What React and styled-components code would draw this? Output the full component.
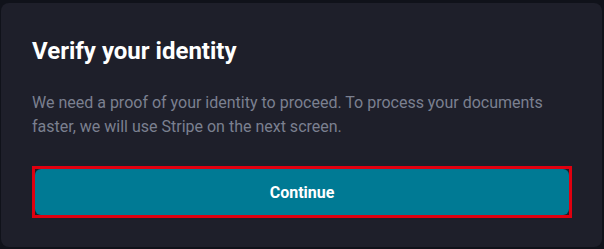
import React from "react";
import styled, { createGlobalStyle } from "styled-components";

const Global = createGlobalStyle`
  html, body { margin: 0; padding: 0; background: #10121a; }
  body { font-family: Roboto, "Noto Sans", Arial, sans-serif; }
  #root { padding: 3px 2px 2px 1px; }
`;

const Card = styled.section`
  box-sizing: border-box;
  width: 601px;
  height: 244px;
  background: #1e1f2a;
  border-radius: 8px;
  padding: 34px 30px 30px 31px;
  display: flex;
  flex-direction: column;
`;

const Title = styled.h2`
  margin: 0;
  font-size: 24px;
  font-weight: 700;
  line-height: 28px;
  color: #ffffff;
`;

const Text = styled.p`
  margin: 26px 0 0;
  font-size: 16px;
  line-height: 24px;
  color: #7b8090;
`;

const Ring = styled.div`
  margin-top: 27px;
  border: 3px solid #e0000f;
  display: flex;
`;

const Button = styled.button`
  flex: 1;
  height: 46px;
  border: 0;
  border-radius: 6px;
  background: #007a94;
  color: #ffffff;
  font-family: Roboto, "Noto Sans", Arial, sans-serif;
  font-size: 16px;
  font-weight: 700;
  cursor: pointer;
`;

export default function App() {
  return (
    <>
      <Global />
      <Card>
        <Title>Verify your identity</Title>
        <Text>
          We need a proof of your identity to proceed. To process your documents
          faster, we will use Stripe on the next screen.
        </Text>
        <Ring>
          <Button>Continue</Button>
        </Ring>
      </Card>
    </>
  );
}
